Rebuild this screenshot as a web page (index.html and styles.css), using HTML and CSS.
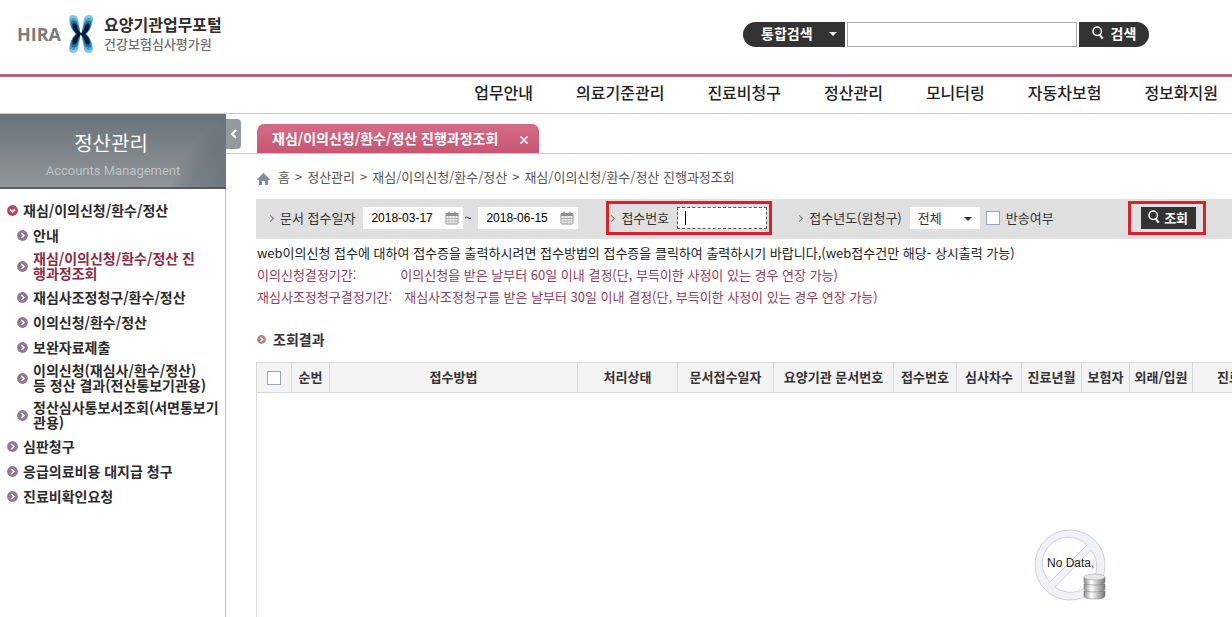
FILE: index.html
```
<!DOCTYPE html>
<html lang="ko">
<head>
    <meta charset="UTF-8">
    <meta name="viewport" content="width=device-width, initial-scale=1.0">
    <title>요양기관업무포털</title>
    <link rel="stylesheet" href="styles.css">
</head>
<body>
    <!-- shared icons -->
    <svg class="defs" width="0" height="0" aria-hidden="true">
        <symbol id="ico-search" viewBox="0 0 12 14">
            <circle cx="5.2" cy="5.2" r="4.2" fill="none" stroke="currentColor" stroke-width="1.5"/>
            <path d="M7.6 8.6L10.6 12.6" stroke="currentColor" stroke-width="2.2" fill="none"/>
        </symbol>
        <symbol id="ico-bullet" viewBox="0 0 11 11">
            <circle cx="5.5" cy="5.5" r="5.4" fill="currentColor"/>
            <path d="M4.3 3L6.9 5.5L4.3 8" stroke="#fff" stroke-width="1.6" fill="none"/>
        </symbol>
        <symbol id="ico-bullet-down" viewBox="0 0 11 11">
            <circle cx="5.5" cy="5.5" r="5.4" fill="currentColor"/>
            <path d="M3 4.4L5.5 6.9L8 4.4" stroke="#fff" stroke-width="1.6" fill="none"/>
        </symbol>
        <symbol id="ico-calendar" viewBox="0 0 14 14">
            <path d="M1 2.5h12v9.5q0 1-1 1H2q-1 0-1-1z" fill="#fff" stroke="#8f8f8f"/>
            <path d="M1 3h12v2H1z" fill="#8f8f8f"/>
            <path d="M4 .5v3M10 .5v3" stroke="#8f8f8f" stroke-width="1.4"/>
            <path d="M1 7.5h12M1 10h12M4 5v8M7 5v8M10 5v8" stroke="#a9a9a9" stroke-width=".9"/>
        </symbol>
    </svg>

    <header class="header">
        <a class="logo" href="#">
            <span class="logo-hira">HIRA</span>
            <svg class="logo-mark" viewBox="0 0 26 40" aria-hidden="true">
                <defs>
                    <g id="lobe">
                        <path d="M1 5Q1 1 5 1Q10 1 10.500 7Q12 14 12 20H8Q1 13 1 5z" fill="#7cc8e4"/>
                        <path d="M2 7Q2 4 5 4Q9 4 10 9Q12 15 12 20H8Q2 14 2 7z" fill="#4a9fca"/>
                        <path d="M3 9Q3 6 5.500 6.500Q9 7 10 11Q12 16 12 20H8Q3 15 3 9z" fill="#22709f"/>
                        <path d="M4.500 10Q7 8 9 12Q10 17 13 19V20H9Q4 16 4.500 10z" fill="#07173a"/>
                    </g>
                </defs>
                <use href="#lobe"/>
                <use href="#lobe" transform="translate(26 0) scale(-1 1)"/>
                <use href="#lobe" transform="translate(0 40) scale(1 -1)"/>
                <use href="#lobe" transform="translate(26 40) scale(-1 -1)"/>
            </svg>
            <span class="logo-name">
                <strong>요양기관업무포털</strong>
                <span>건강보험심사평가원</span>
            </span>
        </a>
        <form class="search">
            <span class="search-type">
                <select aria-label="검색 구분">
                    <option>통합검색</option>
                </select>
            </span>
            <input class="search-text" type="text" aria-label="검색어">
            <button class="search-btn" type="button">
                <svg width="12" height="14" aria-hidden="true"><use href="#ico-search"/></svg>검색
            </button>
        </form>
    </header>

    <nav class="gnb">
        <a href="#">업무안내</a>
        <a href="#">의료기준관리</a>
        <a href="#">진료비청구</a>
        <a href="#">정산관리</a>
        <a href="#">모니터링</a>
        <a href="#">자동차보험</a>
        <a href="#">정보화지원</a>
    </nav>

    <div class="container">
        <aside class="side">
            <div class="side-head">
                <h2>정산관리</h2>
                <p>Accounts Management</p>
            </div>
            <ul class="menu">
                <li class="open"><svg><use href="#ico-bullet-down"/></svg><a href="#">재심/이의신청/환수/정산</a></li>
                <li class="sub"><svg><use href="#ico-bullet"/></svg><a href="#">안내</a></li>
                <li class="sub on"><svg><use href="#ico-bullet"/></svg><a href="#">재심/이의신청/환수/정산 진<br>행과정조회</a></li>
                <li class="sub"><svg><use href="#ico-bullet"/></svg><a href="#">재심사조정청구/환수/정산</a></li>
                <li class="sub"><svg><use href="#ico-bullet"/></svg><a href="#">이의신청/환수/정산</a></li>
                <li class="sub"><svg><use href="#ico-bullet"/></svg><a href="#">보완자료제출</a></li>
                <li class="sub"><svg><use href="#ico-bullet"/></svg><a href="#">이의신청(재심사/환수/정산)<br>등 정산 결과(전산통보기관용)</a></li>
                <li class="sub"><svg><use href="#ico-bullet"/></svg><a href="#">정산심사통보서조회(서면통보기<br>관용)</a></li>
                <li><svg><use href="#ico-bullet"/></svg><a href="#">심판청구</a></li>
                <li><svg><use href="#ico-bullet"/></svg><a href="#">응급의료비용 대지급 청구</a></li>
                <li><svg><use href="#ico-bullet"/></svg><a href="#">진료비확인요청</a></li>
            </ul>
            <button class="side-toggle" type="button" aria-label="메뉴 닫기">
                <svg width="8" height="10" viewBox="0 0 8 10"><path d="M6 1L2 5L6 9" stroke="#fff" stroke-width="2" fill="none"/></svg>
            </button>
        </aside>

        <main class="content">
            <div class="tabs">
                <div class="tab">
                    <span>재심/이의신청/환수/정산 진행과정조회</span>
                    <button type="button" aria-label="탭 닫기">
                        <svg width="8" height="8" viewBox="0 0 8 8"><path d="M.5 .5L7.5 7.5M7.5 .5L.5 7.5" stroke="#fff" stroke-width="1.5"/></svg>
                    </button>
                </div>
            </div>

            <div class="path">
                <svg width="13" height="12" viewBox="0 0 13 12" aria-hidden="true"><path d="M6.5 0L13 6.2L12 7.2L11 6.4V12H8V8H5V12H2V6.4L1 7.2L0 6.2z" fill="#7f8ca3"/></svg>
                <a href="#">홈</a> &gt; <a href="#">정산관리</a> &gt; <a href="#">재심/이의신청/환수/정산</a> &gt; <span>재심/이의신청/환수/정산 진행과정조회</span>
            </div>

            <form class="filter">
                <div class="field">
                    <label class="arrow" for="from">문서 접수일자</label>
                    <span class="date">
                        <input type="text" id="from" value="2018-03-17">
                        <button type="button" aria-label="시작일 선택"><svg width="14" height="14"><use href="#ico-calendar"/></svg></button>
                    </span>
                    <span class="tilde">~</span>
                    <span class="date">
                        <input type="text" id="to" value="2018-06-15" aria-label="종료일">
                        <button type="button" aria-label="종료일 선택"><svg width="14" height="14"><use href="#ico-calendar"/></svg></button>
                    </span>
                </div>
                <div class="field mark mark-no">
                    <label class="arrow" for="receipt">접수번호</label>
                    <span class="receipt"><input type="text" id="receipt"></span>
                </div>
                <div class="field field-year">
                    <label class="arrow" for="year">접수년도(원청구)</label>
                    <span class="year">
                        <select id="year">
                            <option>전체</option>
                        </select>
                    </span>
                    <input class="check" type="checkbox" id="returned">
                    <label for="returned">반송여부</label>
                </div>
                <div class="mark mark-btn">
                    <button class="query" type="button">
                        <svg width="12" height="14" aria-hidden="true"><use href="#ico-search"/></svg>조회
                    </button>
                </div>
            </form>

            <div class="notice">
                <p>web이의신청 접수에 대하여 접수증을 출력하시려면 접수방법의 접수증을 클릭하여 출력하시기 바랍니다,(web접수건만 해당- 상시출력 가능)</p>
                <dl>
                    <dt>이의신청결정기간:</dt>
                    <dd class="wide">이의신청을 받은 날부터 60일 이내 결정(단, 부득이한 사정이 있는 경우 연장 가능)</dd>
                </dl>
                <dl>
                    <dt>재심사조정청구결정기간:</dt>
                    <dd>재심사조정청구를 받은 날부터 30일 이내 결정(단, 부득이한 사정이 있는 경우 연장 가능)</dd>
                </dl>
            </div>

            <h3 class="title"><svg width="9" height="9" viewBox="0 0 11 11"><use href="#ico-bullet" width="11" height="11"/></svg>조회결과</h3>

            <div class="grid">
                <table>
                    <colgroup>
                        <col class="c-check"><col class="c-no"><col class="c-way"><col class="c-state"><col class="c-date"><col class="c-doc"><col class="c-receipt"><col class="c-order"><col class="c-month"><col class="c-insurer"><col class="c-type"><col>
                    </colgroup>
                    <thead>
                        <tr>
                            <th><input class="check" type="checkbox" aria-label="전체 선택"></th>
                            <th>순번</th>
                            <th>접수방법</th>
                            <th>처리상태</th>
                            <th>문서접수일자</th>
                            <th>요양기관 문서번호</th>
                            <th>접수번호</th>
                            <th>심사차수</th>
                            <th>진료년월</th>
                            <th>보험자</th>
                            <th>외래/입원</th>
                            <th class="last">진료</th>
                        </tr>
                    </thead>
                    <tbody>
                        <tr>
                            <td colspan="12">
                                <div class="nodata">
                                    <svg width="72" height="72" viewBox="0 0 72 72" aria-hidden="true">
                                        <defs>
                                            <linearGradient id="metal">
                                                <stop offset="0" stop-color="#8b8b8b"/>
                                                <stop offset=".35" stop-color="#fff"/>
                                                <stop offset="1" stop-color="#777"/>
                                            </linearGradient>
                                        </defs>
                                        <path fill-rule="evenodd" d="M36 1A35 35 0 1 1 36 71A35 35 0 1 1 36 1zM53 16A26 26 0 0 0 16 53zM57 21L21 58A26 26 0 0 0 57 21z" fill="#f0f2f6" stroke="#cdd2d9"/>
                                        <g fill="url(#metal)" stroke="#777" stroke-width=".5">
                                            <path d="M50 62v5q0 3 10.500 3T71 67v-5z"/>
                                            <path d="M50 55v5q0 3 10.500 3T71 60v-5z"/>
                                            <path d="M50 48v5q0 3 10.500 3T71 53v-5z"/>
                                        </g>
                                        <ellipse cx="60.500" cy="48" rx="10.500" ry="3" fill="#e6e6e6" stroke="#999" stroke-width=".5"/>
                                    </svg>
                                    <span>No Data,</span>
                                </div>
                            </td>
                        </tr>
                    </tbody>
                </table>
            </div>
        </main>
    </div>
</body>
</html>
```
FILE: styles.css
```
* {
    box-sizing: border-box;
}

body {
    margin: 0;
    height: 100vh;
    overflow: hidden;
    display: flex;
    flex-direction: column;
    background-color: #fff;
    color: #333;
    font-family: "Noto Sans CJK KR", sans-serif;
    font-size: 13px;
    line-height: 20px;
}

a {
    color: inherit;
    text-decoration: none;
}

h2, h3, p, ul, dl, dd {
    margin: 0;
    padding: 0;
}

input, select, button {
    margin: 0;
    padding: 0;
    border: none;
    border-radius: 0;
    outline: none;
    color: inherit;
    font-family: inherit;
    font-size: 13px;
}

select {
    appearance: none;
    background: none;
}

button {
    display: flex;
    align-items: center;
    justify-content: center;
    background: none;
    cursor: pointer;
}

.defs {
    position: absolute;
}

/* header */
.header {
    flex: none;
    display: flex;
    justify-content: space-between;
    align-items: center;
    height: 77px;
    padding: 0 83px 6px 17px;
    border-bottom: 3px solid #b5667a;
}

.logo {
    display: flex;
    align-items: center;
    gap: 7px;
}

.logo-hira {
    color: #7b7b7b;
    font-family: "Open Sans", sans-serif;
    font-size: 18px;
    font-weight: 700;
}

.logo-mark {
    width: 26px;
    height: 40px;
}

.logo-name {
    display: flex;
    flex-direction: column;
    margin-left: 3px;
    color: #6f6f6f;
    font-weight: 500;
}

.logo-name strong {
    color: #2d2d2d;
    font-size: 16px;
}

.search {
    display: flex;
    gap: 2px;
}

.search-type {
    position: relative;
    background-color: #333;
    border-radius: 13px 0 0 13px;
}

.search-type select {
    width: 102px;
    height: 25px;
    padding: 0 0 2px 18px;
    color: #fff;
    font-size: 14px;
    font-weight: 700;
}

.search-type::after, .year::after {
    content: "";
    position: absolute;
    top: 10px;
    right: 8px;
    border: 4px solid transparent;
    border-top-color: currentColor;
    border-bottom: none;
}

.search-type::after {
    color: #fff;
}

.search-text {
    width: 230px;
    height: 25px;
    padding: 0 6px;
    border: 1px solid #a4a8ae;
}

.search-btn {
    width: 70px;
    height: 25px;
    gap: 7px;
    padding-bottom: 2px;
    border-radius: 0 13px 13px 0;
    background-color: #333;
    color: #fff;
    font-size: 14px;
    font-weight: 700;
}

.gnb {
    flex: none;
    display: flex;
    justify-content: flex-end;
    align-items: center;
    gap: 43px;
    height: 37px;
    padding: 0 14px 6px 0;
    border-bottom: 1px solid #c8c8c8;
    color: #222;
    font-size: 16px;
    font-weight: 500;
}

.container {
    flex: 1;
    display: flex;
    min-height: 0;
    overflow: hidden;
}

/* left menu */
.side {
    position: relative;
    flex: none;
    width: 226px;
    border-right: 1px solid #c0c0c0;
}

.side-head {
    height: 75px;
    margin-right: -1px;
    padding-top: 18px;
    border-bottom: 2px solid #565c62;
    background: radial-gradient(circle at 280px 110px, rgba(78, 94, 106, 0.5) 70px, rgba(78, 94, 106, 0.3) 100px, transparent 118px), linear-gradient(#69727a, #929699);
    text-align: center;
}

.side-head h2 {
    padding-right: 4px;
    color: #fff;
    font-size: 20px;
    font-weight: 400;
    line-height: 22px;
}

.side-head p {
    margin-top: 8px;
    color: #bdc3c7;
    font-family: Roboto, sans-serif;
    font-size: 13px;
    line-height: 18px;
}

.menu {
    padding-top: 9px;
    list-style: none;
    color: #2b2b2b;
    font-size: 14px;
    font-weight: 700;
    line-height: 15px;
    white-space: nowrap;
}

.menu li {
    display: flex;
    align-items: center;
    gap: 5px;
    min-height: 25px;
    padding: 3px 0 4px 7px;
}

.menu .sub {
    padding-left: 17px;
}

.menu svg {
    flex: none;
    width: 11px;
    height: 11px;
    color: #8f7890;
}

.menu .open svg {
    color: #b8465f;
}

.menu .on a {
    color: #8c2b45;
}

.side-toggle {
    position: absolute;
    top: 5px;
    left: 226px;
    width: 15px;
    height: 30px;
    border-radius: 0 4px 4px 0;
    background-color: #929a9e;
}

/* content */
.content {
    flex: 1;
    min-width: 0;
}

.tabs {
    display: flex;
    padding: 10px 0 0 31px;
    border-bottom: 1px solid #c8c8c8;
}

.tab {
    display: flex;
    align-items: center;
    gap: 22px;
    height: 29px;
    padding: 0 11px 2px 15px;
    border-radius: 7px 7px 0 0;
    background: linear-gradient(#d46c87, #c75672);
    color: #fff;
    font-size: 14px;
    font-weight: 700;
}

.tab button {
    padding-top: 4px;
}

.path {
    display: flex;
    align-items: center;
    gap: 5px;
    height: 45px;
    padding: 0 0 0 31px;
    color: #555;
    white-space: nowrap;
}

.path svg {
    margin: 4px 3px 0 0;
}

.filter {
    display: flex;
    align-items: center;
    height: 40px;
    margin-left: 30px;
    padding: 0 0 2px 12px;
    background-color: #e0e0e0;
    white-space: nowrap;
}

.field {
    display: flex;
    align-items: center;
}

.arrow {
    display: flex;
    align-items: center;
    margin-right: 8px;
}

.arrow::before {
    content: "";
    width: 4px;
    height: 4px;
    margin-right: 7px;
    border: solid #777;
    border-width: 1px 1px 0 0;
    transform: rotate(45deg);
}

.date {
    display: flex;
    align-items: center;
    width: 100px;
    height: 22px;
    padding: 0 4px 0 8px;
    background-color: #fff;
}

.date input {
    flex: 1;
    min-width: 0;
    color: #000;
    font-family: "Liberation Sans", sans-serif;
    font-size: 12px;
}

.tilde {
    width: 15px;
    padding-left: 1px;
}

.mark {
    display: flex;
    align-items: center;
    height: 34px;
    border: 3px solid #dc2028;
}

.mark-no {
    margin-left: 28px;
    padding-right: 2px;
}

.receipt {
    position: relative;
}

/* text cursor */
.receipt::after {
    content: "";
    position: absolute;
    top: 4px;
    left: 8px;
    width: 1px;
    height: 14px;
    background-color: #000;
}

.receipt input {
    display: block;
    width: 90px;
    height: 22px;
    padding: 0 8px;
    border: 1px dashed #555;
    background-color: #fff;
}

.field-year {
    margin-left: 25px;
}

.year {
    position: relative;
    margin-right: 6px;
    background-color: #fff;
}

.year select {
    display: block;
    width: 70px;
    height: 22px;
    padding: 0 0 2px 8px;
}

.check {
    appearance: none;
    display: block;
    width: 14px;
    height: 14px;
    border: 1px solid #98a6bb;
    background-color: #fff;
}

.field .check {
    margin-right: 6px;
}

.mark-btn {
    margin-left: 74px;
    padding: 0 7px 0 10px;
}

.query {
    width: 55px;
    height: 22px;
    gap: 4px;
    padding-bottom: 2px;
    background-color: #333;
    color: #fff;
    font-weight: 700;
}

.notice {
    padding: 3px 0 0 31px;
    color: #222;
    line-height: 22px;
    white-space: nowrap;
}

.notice dl {
    display: flex;
    gap: 12px;
    color: #93405c;
}

.notice .wide {
    margin-left: 32px;
}

.title {
    display: flex;
    align-items: center;
    gap: 7px;
    height: 44px;
    padding: 0 0 2px 31px;
    margin-top: 10px;
    font-size: 14px;
}

.title svg {
    color: #ad8583;
}

/* result list */
.grid {
    margin-left: 30px;
    overflow: hidden;
}

.grid table {
    width: 1628px;
    border-collapse: collapse;
    table-layout: fixed;
}

.grid th {
    height: 30px;
    padding: 0 0 2px;
    border: 1px solid #d9d9d9;
    background-color: #f4f4f4;
    font-size: 13px;
    font-weight: 700;
    line-height: 20px;
    white-space: nowrap;
}

.grid .last {
    padding-left: 24px;
    text-align: left;
}

.grid th .check {
    margin: 2px auto 0;
}

.grid td {
    height: 344px;
    padding: 0;
    border: 1px solid #d9d9d9;
}

.c-check { width: 35px; }
.c-no { width: 38px; }
.c-way { width: 248px; }
.c-state { width: 100px; }
.c-date { width: 96px; }
.c-doc { width: 120px; }
.c-receipt { width: 63px; }
.c-order { width: 65px; }
.c-month { width: 60px; }
.c-insurer { width: 48px; }
.c-type { width: 63px; }

.nodata {
    position: relative;
    width: 72px;
    height: 72px;
    margin: 0 auto;
    color: #222;
    font-family: "Liberation Sans", sans-serif;
    font-size: 12px;
}

.nodata span {
    position: absolute;
    top: 24px;
    left: 13px;
    white-space: nowrap;
}
```
